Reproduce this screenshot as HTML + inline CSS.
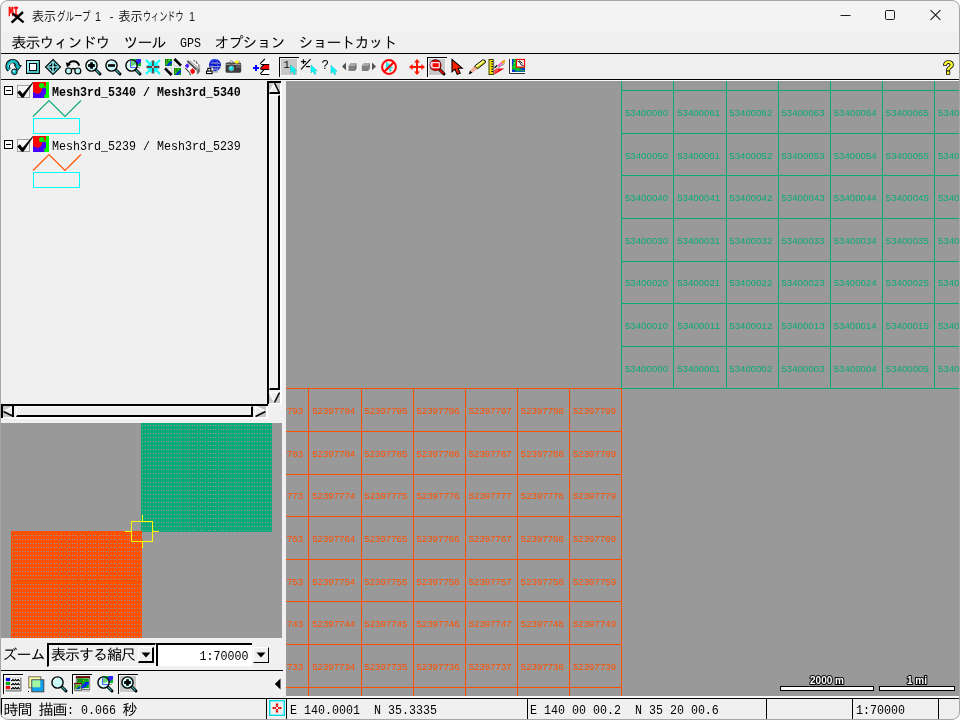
<!DOCTYPE html>
<html lang="ja"><head><meta charset="utf-8"><title>表示グループ 1 - 表示ウィンドウ 1</title>
<style>
html,body{margin:0;padding:0;background:#fff}
body{width:960px;height:720px;overflow:hidden;position:relative}
div,svg{box-sizing:border-box}
svg{position:absolute;overflow:visible}
.l{position:absolute;font-family:"Liberation Mono",monospace;font-size:11.667px;line-height:12px;white-space:pre;color:#000;transform:scaleY(1.15);transform-origin:0 0;letter-spacing:0}
.lb{font-weight:bold}
.j{position:absolute;font-family:"Liberation Mono","IPAGothic",monospace;font-size:15px;line-height:15px;letter-spacing:-1px;white-space:pre;color:#000}
.t{position:absolute;font-family:"Liberation Sans","Noto Sans CJK JP",sans-serif;font-size:12px;line-height:16px;white-space:pre;color:#1a1a1a}
#root{position:absolute;left:0;top:0;width:960px;height:720px;overflow:hidden;will-change:transform}
#frame{position:absolute;left:0;top:0;width:960px;height:720px;border:1px solid #a6a6a6;border-radius:8px;box-shadow:0 0 0 12px #fff;pointer-events:none}
text{white-space:pre}
</style></head>
<body>
<div id="root">
<div style="position:absolute;left:0px;top:0px;width:960px;height:31px;background:#f3f3f3;"></div>
<div style="position:absolute;left:0px;top:31px;width:960px;height:689px;background:#f0f0f0;"></div>
<svg style="left:8px;top:6.6px" width="18" height="18" viewBox="0 0 18 18"><text x="0.4" y="8.6" font-family="'Liberation Mono',monospace" font-weight="bold" font-size="12.4" fill="#ff0000" stroke="#ff0000" stroke-width="0.5" textLength="10" lengthAdjust="spacingAndGlyphs">MI</text><path d="M4.6 6.4L15.6 15.4M15 5L3.6 15.6" stroke="#000" stroke-width="2.4"/></svg>
<div class="t" style="left:32px;top:9px;">表示</div>
<div class="t" style="left:56.5px;top:9px;transform:scaleX(0.71);transform-origin:0 0;">グループ</div>
<div class="t" style="left:94.5px;top:9px;transform:scaleX(0.9);transform-origin:0 0;">1</div>
<div class="t" style="left:109.5px;top:9px;">-</div>
<div class="t" style="left:118.5px;top:9px;">表示</div>
<div class="t" style="left:143px;top:9px;transform:scaleX(0.675);transform-origin:0 0;">ウィンドウ</div>
<div class="t" style="left:188.5px;top:9px;transform:scaleX(0.9);transform-origin:0 0;">1</div>
<svg style="left:830px;top:0" width="130" height="30" viewBox="0 0 130 30" fill="none" stroke="#1a1a1a" stroke-width="1">
<path d="M10.5 15.5H20.5"/><rect x="55.5" y="10.5" width="9" height="9" rx="1.2"/><path d="M100.6 10.1L110.4 19.9M110.4 10.1L100.6 19.9" stroke-width="1.1"/></svg>
<div class="j" style="left:11.5px;top:37px;">表示ウィンドウ</div>
<div class="j" style="left:123.5px;top:37px;">ツール</div>
<div class="j" style="left:214.5px;top:37px;">オプション</div>
<div class="j" style="left:298.5px;top:37px;">ショートカット</div>
<div class="l" style="left:180px;top:37px;">GPS</div>
<div style="position:absolute;left:0px;top:53px;width:960px;height:1px;background:#000;"></div>
<div style="position:absolute;left:0px;top:79px;width:960px;height:1px;background:#000;"></div>
<div style="position:absolute;left:285px;top:80px;width:675px;height:1px;background:#fafafa;"></div>
<div style="position:absolute;left:279px;top:57px;width:20px;height:20px;background:#f4f4f4;border-left:1px solid #000;border-top:1px solid #000"></div>
<div style="position:absolute;left:281px;top:59px;width:16px;height:16px;background:#c8c8c8;"></div>
<div style="position:absolute;left:427px;top:57px;width:20px;height:20px;background:#f4f4f4;border-left:1px solid #000;border-top:1px solid #000"></div>
<div style="position:absolute;left:429px;top:59px;width:16px;height:16px;background:#c8c8c8;"></div>
<svg style="left:5px;top:59px" width="16" height="16" viewBox="0 0 16 16"><path d="M4.2 11A5.1 5.1 0 1 1 12.8 7.4" fill="none" stroke="#000" stroke-width="4.4"/><path d="M9.2 5.8L16.4 6.6L12.6 11.4Z" fill="#10b8c0" stroke="#000" stroke-width="0.9"/><path d="M4.2 11A5.1 5.1 0 1 1 12.8 7.4" fill="none" stroke="#18b8c0" stroke-width="2.6"/><path d="M3.4 8A4.4 4.4 0 0 1 7.8 3.6" fill="none" stroke="#7fe8e8" stroke-width="1"/><circle cx="9.4" cy="12.8" r="2.8" fill="#18c0c8" stroke="#000" stroke-width="1"/><circle cx="8.7" cy="12" r="0.9" fill="#bff"/></svg>
<svg style="left:25px;top:59px" width="16" height="16" viewBox="0 0 16 16"><rect x="1.5" y="1.5" width="13" height="13" fill="#48c0c0" stroke="#000"/><path d="M2 2H14L11.5 4.5H4.5V11.5L2 14Z" fill="#9ff0f0"/><rect x="4.5" y="4.5" width="7" height="7" fill="#fff" stroke="#000"/></svg>
<svg style="left:45px;top:59px" width="16" height="16" viewBox="0 0 16 16"><path d="M8 0.5L15.5 8L8 15.5L0.5 8Z" fill="#8cecec" stroke="#000" stroke-width="1.1"/><path d="M8 1.6L14.4 8L8 14.4Z" fill="#50c8cc"/><path d="M8 2.4V13.6M2.4 8H13.6" stroke="#208890" stroke-width="2.6"/><path d="M8 2.4V13.6M2.4 8H13.6" stroke="#c8ffff" stroke-width="1.2"/><path d="M4.6 6.6H6.6V4.6M11.4 6.6H9.4V4.6M4.6 9.4H6.6V11.4M11.4 9.4H9.4V11.4" stroke="#000" stroke-width="1.1" fill="none"/></svg>
<svg style="left:65px;top:59px" width="16" height="16" viewBox="0 0 16 16"><path d="M3.2 6.2C4.5 1.2 12.2 0.6 14.2 6.6" fill="none" stroke="#000" stroke-width="2"/><path d="M0.8 3.2L5.8 5.2L2 8.6Z" fill="#000"/><path d="M6 11C7 9 9.6 9 10.6 11" fill="none" stroke="#000" stroke-width="1.3"/><circle cx="3.6" cy="12" r="3" fill="#b8f6f6" stroke="#000" stroke-width="1.2"/><circle cx="12.8" cy="12" r="3" fill="#b8f6f6" stroke="#000" stroke-width="1.2"/></svg>
<svg style="left:85px;top:59px" width="16" height="16" viewBox="0 0 16 16"><path d="M10.2 10.2L15 15" stroke="#000" stroke-width="3" stroke-linecap="round"/><path d="M11 11L14.6 14.6" stroke="#30b0b0" stroke-width="1.2"/><circle cx="6.5" cy="6.5" r="5.6" fill="#c8fafa" stroke="#000" stroke-width="1.4"/><path d="M3 5.5A3.8 3.8 0 0 1 6 2.6" stroke="#fff" stroke-width="1.2" fill="none"/><path d="M6.5 3.2V9.8M3.2 6.5H9.8" stroke="#000" stroke-width="2.8"/></svg>
<svg style="left:105px;top:59px" width="16" height="16" viewBox="0 0 16 16"><path d="M10.2 10.2L15 15" stroke="#000" stroke-width="3" stroke-linecap="round"/><path d="M11 11L14.6 14.6" stroke="#30b0b0" stroke-width="1.2"/><circle cx="6.5" cy="6.5" r="5.6" fill="#c8fafa" stroke="#000" stroke-width="1.4"/><path d="M3 5.5A3.8 3.8 0 0 1 6 2.6" stroke="#fff" stroke-width="1.2" fill="none"/><path d="M3 6.5H10" stroke="#000" stroke-width="2.6"/></svg>
<svg style="left:125px;top:59px" width="16" height="16" viewBox="0 0 16 16"><rect x="5" y="0" width="11" height="7" fill="#00c020"/><path d="M5 5L9 4L12 0H16V3L11 7H5Z" fill="#3020ff"/><path d="M9 8.5H15" stroke="#909090"/><path d="M10.2 10.2L15 15" stroke="#000" stroke-width="3" stroke-linecap="round"/><path d="M11 11L14.6 14.6" stroke="#30b0b0" stroke-width="1.2"/><circle cx="6.5" cy="6.5" r="5.6" fill="#d8fcfc" stroke="#000" stroke-width="1.4"/><path d="M3 5.5A3.8 3.8 0 0 1 6 2.6" stroke="#fff" stroke-width="1.2" fill="none"/><path d="M5.5 1.5V8.5H11" stroke="#6060ff" stroke-width="1" fill="none"/><path d="M6 2.2A5 5 0 0 1 11.6 5L6 7.5Z" fill="#30c040" opacity="0.7"/></svg>
<svg style="left:145px;top:59px" width="16" height="16" viewBox="0 0 16 16"><path d="M8 1.5V14.5M1.5 8H14.5" stroke="#5a4848" stroke-width="2.6"/><g stroke="#00ffff" fill="none"><path d="M1 1L6.4 6.4M15 1L9.6 6.4M1 15L6.4 9.6M15 15L9.6 9.6" stroke-width="2"/><path d="M2.6 6.3H6.3V2.6M13.4 6.3H9.7V2.6M2.6 9.7H6.3V13.4M13.4 9.7H9.7V13.4" stroke-width="1.6"/></g><rect x="7.2" y="7.2" width="1.6" height="1.6" fill="#fff"/></svg>
<svg style="left:165px;top:59px" width="16" height="16" viewBox="0 0 16 16"><rect x="0" y="0" width="7" height="7" fill="#00a818"/><path d="M0 0h3.15v2.1h-1.4000000000000001v2.1h-1.75Z" fill="#008010"/><path d="M1.75 7v-1.4000000000000001h1.4000000000000001v-1.54h1.4000000000000001v-1.54h2.4499999999999997v1.9600000000000002h-1.4000000000000001v1.54h-1.4000000000000001v0.9800000000000001Z" fill="#0020ff"/><path d="M1.26 1.05h1M0.84 2.94h1M3.5 1.4000000000000001h1M1.4000000000000001 4.760000000000001h1" stroke="#e0d000" stroke-width="1" fill="none"/><rect x="9" y="9" width="7" height="7" fill="#00a818"/><path d="M9 9h3.15v2.1h-1.4000000000000001v2.1h-1.75Z" fill="#008010"/><path d="M10.75 16v-1.4000000000000001h1.4000000000000001v-1.54h1.4000000000000001v-1.54h2.4499999999999997v1.9600000000000002h-1.4000000000000001v1.54h-1.4000000000000001v0.9800000000000001Z" fill="#0020ff"/><path d="M10.26 10.05h1M9.84 11.94h1M12.5 10.4h1M10.4 13.760000000000002h1" stroke="#e0d000" stroke-width="1" fill="none"/><path d="M9.2 0.4V7H16Z" fill="#fff" stroke="#b0b0b0" stroke-width="0.6"/><path d="M9.4 0L16 6.6" stroke="#000" stroke-width="2.6"/><path d="M0 9H6.8V15.8Z" fill="#fff" stroke="#b0b0b0" stroke-width="0.6"/><path d="M0 9.4L6.6 16" stroke="#000" stroke-width="2.6"/></svg>
<svg style="left:185px;top:59px" width="16" height="17" viewBox="0 0 16 17"><path d="M1 3.4L7.6 0.6L15.2 6V12.4L11.4 16.4H4.4L0.2 10.4Z" fill="#fafafa"/><path d="M11.6 8.4L15.2 6V12.6L11.6 16.4Z" fill="#a8a8a8"/><path d="M12.4 11L14.4 9.4V13L12.6 15Z" fill="#606060"/><path d="M2.4 2L11.6 10.6" stroke="#484848" stroke-width="1.8"/><path d="M5 1.6L12.6 8.6" stroke="#b0b0b0" stroke-width="1.2"/><path d="M8.4 1.2l2 1.4M11.6 2.4l0.4 2.6M13 6h1.4" stroke="#383838" stroke-width="1"/><path d="M0.7 6.2L2.3 4.6L3.8 6.2V7.6L2.3 8.9L0.7 7.6Z" fill="#4418ff" stroke="#4418ff" stroke-width="0.6"/><path d="M5.8 11L7.6 9.6L9.6 11.2V13.4L7.8 14.9L5.8 13.4Z" fill="#ff0010" stroke="#ff0010" stroke-width="0.6"/><path d="M0.2 9.2L4.6 13.6M4.4 14.4l1.4 1.6" stroke="#484848" stroke-width="1.2"/></svg>
<svg style="left:205px;top:59px" width="18" height="16" viewBox="0 0 18 16"><path d="M7 12.9H13" stroke="#909090" stroke-width="1.2"/><circle cx="10" cy="5.9" r="6" fill="#0818d0"/><path d="M5 3.4C6 1.4 8.4 0.4 10 0.4" stroke="#4060ff" stroke-width="1.2" fill="none"/><path d="M6.4 4.4C8 3 9.6 4.6 11 4C12.4 3.4 13 4.6 14.6 4.4M5.4 7.4C7.4 6.4 9 8.6 11.4 7.6C13 7 14 8 15.6 7.4M7.4 10.4C9 9.6 11 10.8 13.4 9.8" stroke="#e8e0c0" stroke-width="0.9" fill="none"/><path d="M10 0.6C12 1 12.6 2.4 12.2 3.4M12.4 5.4C13.4 7 13 9 12 10.8" stroke="#6080ff" stroke-width="0.8" fill="none"/><rect x="0.6" y="8.6" width="7.4" height="7" fill="#f8f8f8"/><path d="M2.8 12V9.4H5.8V12" fill="#fff" stroke="#000" stroke-width="1.1"/><rect x="1.5" y="12.1" width="5.6" height="2.5" fill="#fff" stroke="#000" stroke-width="1.1"/></svg>
<svg style="left:225px;top:59px" width="17" height="16" viewBox="0 0 17 16"><path d="M0.6 5.2C0.6 4 1.6 3.6 2.6 3.6H4.2L6.4 0.8L8.6 3.6H14.4C15.6 3.6 16.2 4.4 16.2 5.4V12C16.2 13.2 15.4 13.8 14.4 13.8H2.4C1.2 13.8 0.6 13 0.6 12Z" fill="#3c3c3c"/><path d="M1.2 5.4H15.6" stroke="#9a9a9a" stroke-width="1.2"/><path d="M11 6.4H15.8V9H11Z" fill="#5c5c5c"/><path d="M4.8 3.4L6.4 1.2L8 3.4Z" fill="#fff"/><circle cx="6.3" cy="9.4" r="3.6" fill="#8c8c8c" stroke="#1c1c1c" stroke-width="0.8"/><circle cx="6.3" cy="9.4" r="2.1" fill="#00e0f0"/><circle cx="5.7" cy="8.8" r="0.8" fill="#b0ffff"/><rect x="10.2" y="1.6" width="3.2" height="2.8" fill="#ffff00"/><path d="M13.6 1.2L15 3.8" stroke="#b0b0b0" stroke-width="1"/></svg>
<svg style="left:252px;top:59px" width="18" height="17" viewBox="0 0 18 17"><path d="M4 6V12M1 9H7" stroke="#0000ff" stroke-width="2"/><path d="M12.7 0.2H17.2V5.2H8.6Z" fill="#fff"/><path d="M11.8 11H17.2V15.2H8.6Z" fill="#fff"/><path d="M11.5 6H17.2V10.2H8.4Z" fill="#ff0000"/><path d="M12.9 0L8.2 4.7M11.7 5.8L8.2 9.6M12 10.8L8.2 14.8" stroke="#000" stroke-width="1.1" fill="none"/><path d="M8.8 5.5H17.2M8.8 10.5H17.2M8.8 15.5H17.2" stroke="#000" stroke-width="1" fill="none"/></svg>
<svg style="left:281px;top:59px" width="16" height="16" viewBox="0 0 16 16"><text x="2.6" y="9.4" font-family="'Liberation Mono',monospace" font-size="10.5" fill="#000">1</text><path d="M9.6 6V14L11.6 12.2L13.2 15.4L14.6 14.8L13.1 11.8H15.8Z" fill="#00ffff" stroke="#20b0b0" stroke-width="0.5"/></svg>
<svg style="left:300px;top:59px" width="18" height="16" viewBox="0 0 18 16"><path d="M3.5 0.2V5M1 2.6H6" stroke="#000" stroke-width="1.2"/><path d="M10.6 0.2L1 10.4" stroke="#000" stroke-width="1.1"/><path d="M6 7.6H10" stroke="#000" stroke-width="1.2"/><path d="M11 6V14L13 12.2L14.6 15.4L16 14.8L14.5 11.8H17.2Z" fill="#00ffff" stroke="#20b0b0" stroke-width="0.5"/></svg>
<svg style="left:321px;top:59px" width="18" height="16" viewBox="0 0 18 16"><text x="0.4" y="9.6" font-family="'Liberation Mono',monospace" font-size="12.5" fill="#000">?</text><path d="M10 6.4V14.4L12 12.600000000000001L13.6 15.8L15 15.200000000000001L13.5 12.2H16.2Z" fill="#00ffff" stroke="#20b0b0" stroke-width="0.5"/></svg>
<svg style="left:341px;top:59px" width="16" height="16" viewBox="0 0 16 16"><path d="M5 3.6V11.2L1 7.4Z" fill="#505050"/><path d="M7.5 6.5L9.5 4H15.5L14 6.5Z" fill="#a8a8a8"/><rect x="7.5" y="6.5" width="6.5" height="5.5" fill="#808080"/><path d="M14 6.5L15.5 4V9.6L14 12Z" fill="#686868"/></svg>
<svg style="left:361px;top:59px" width="16" height="16" viewBox="0 0 16 16"><path d="M0.8 6.5L2.8 4H8.8L7.3 6.5Z" fill="#a8a8a8"/><rect x="0.8" y="6.5" width="6.5" height="5.5" fill="#808080"/><path d="M7.3 6.5L8.8 4V9.6L7.3 12Z" fill="#686868"/><path d="M11 3.6V11.2L15 7.4Z" fill="#505050"/></svg>
<svg style="left:381px;top:59px" width="16" height="16" viewBox="0 0 16 16"><path d="M5.4 3V11L7.4 9.2L9.0 12.4L10.4 11.8L8.9 8.8H11.600000000000001Z" fill="#00ffff" stroke="#20b0b0" stroke-width="0.5"/><circle cx="8" cy="8" r="6.9" fill="none" stroke="#ff0000" stroke-width="2"/><path d="M12.8 3.2L3.2 12.8" stroke="#ff0000" stroke-width="2"/></svg>
<svg style="left:409px;top:59px" width="16" height="16" viewBox="0 0 16 16"><path d="M8 2V14M2 8H14" stroke="#ff1800" stroke-width="2"/><g fill="#ff1800"><path d="M8 0L11 3.6H5Z"/><path d="M8 16L11 12.4H5Z"/><path d="M0 8L3.6 5V11Z"/><path d="M16 8L12.4 5V11Z"/></g></svg>
<svg style="left:429px;top:59px" width="16" height="16" viewBox="0 0 16 16"><path d="M10.4 10.4L15 15" stroke="#000" stroke-width="3" stroke-linecap="round"/><path d="M10.6 10.6L14.6 14.6" stroke="#ff0000" stroke-width="1.6"/><circle cx="6.5" cy="6.2" r="5.9" fill="#400000"/><circle cx="6.5" cy="6.2" r="5.2" fill="#e00000"/><path d="M2.2 8A4.6 4.6 0 0 1 3.4 2.8" stroke="#ffb0ff" stroke-width="1.3" fill="none"/><rect x="3" y="3.7" width="7.2" height="5" fill="#ff0000" stroke="#fff" stroke-width="1.1"/></svg>
<svg style="left:450px;top:59px" width="16" height="16" viewBox="0 0 16 16"><path d="M2 0.5V12.8L5 10.2L7.2 15.4L10.2 14.2L8 9.2H12.2Z" fill="#ff2000" stroke="#000" stroke-width="1.1" stroke-linejoin="miter"/></svg>
<svg style="left:468px;top:59px" width="18" height="16" viewBox="0 0 18 16"><path d="M0.6 15.6L2 11.6L4.6 13.8Z" fill="#000"/><path d="M2 11.6L6.6 7L9.4 9.8L4.6 13.8Z" fill="#f4a8a0"/><path d="M3.4 12.2L7.6 8.4" stroke="#e0c060" stroke-width="0.8"/><path d="M6.6 7L14.8 0.8L17.2 1.6L17.4 3.6L9.4 9.8Z" fill="#ffff40" stroke="#000" stroke-width="1"/><path d="M7.8 7.6L15.6 1.8" stroke="#fff" stroke-width="0.8"/><path d="M9 9L17 3" stroke="#909000" stroke-width="0.8"/></svg>
<svg style="left:488px;top:59px" width="18" height="16" viewBox="0 0 18 16"><rect x="1" y="0.5" width="4.4" height="15" fill="#f0e000" stroke="#404000" stroke-width="1"/><path d="M5.6 0.5V15.5" stroke="#707070" stroke-width="1.2"/><path d="M3.4 2.5H5M3.4 5H5M3.4 7.5H5M3.4 10H5M3.4 12.5H5" stroke="#000" stroke-width="1"/><path d="M6.4 15.5L16.4 9.4H8.4L6.4 11.4Z" fill="#e80010"/><path d="M6.4 15.5L11 10.4L8.6 9.6L6.4 11.4Z" fill="#ff5050"/><path d="M6.6 8.8L9.4 6.2" stroke="#000" stroke-width="1.2"/><path d="M9 6.6L14 2.4L16.4 0.8L17 2.6L11 7.8Z" fill="#ff60d0"/><path d="M13.2 2.8L16.6 0.6L17.2 3L14.6 5Z" fill="#f0a000"/><path d="M10 8.6L16.6 4.6" stroke="#808080" stroke-width="1"/></svg>
<svg style="left:508px;top:59px" width="18" height="16" viewBox="0 0 18 16"><path d="M1.5 0V14.5H17" stroke="#303030" stroke-width="1" fill="none"/><path d="M2.5 0V13.5H17" stroke="#fff" stroke-width="1" fill="none"/><rect x="4" y="0" width="13" height="13" fill="#00c020"/><path d="M4 0H5.6V3L4.8 6L4 8ZM11 9.4L17 9V11L13.6 10.8Z M4 11L6 10L7.4 11.4L6 13H4Z" fill="#0030e0"/><path d="M5.4 3.4h1v2M6 7l1 1.4M9 12h2M13 12h2.6" stroke="#60f060" stroke-width="1"/><path d="M4 12.2H17" stroke="#0030e0" stroke-width="0.9"/><rect x="8.5" y="0.5" width="8" height="7.6" fill="#fff" stroke="#ff0000" stroke-width="1.2"/><path d="M9.6 2L12 3.6L13 5.8L15.6 6.6M11 1.6L14.6 4.4" stroke="#000" stroke-width="0.9" fill="none"/></svg>
<svg style="left:940px;top:59px" width="16" height="16" viewBox="0 0 16 16"><text x="8.4" y="14.6" text-anchor="middle" font-family="'Liberation Sans',sans-serif" font-weight="bold" font-size="18" fill="#ffff30" stroke="#000" stroke-width="1.7" paint-order="stroke" stroke-linejoin="round">?</text></svg>
<svg style="left:4px;top:86px" width="9" height="9" viewBox="0 0 9 9" shape-rendering="crispEdges"><rect x="0.5" y="0.5" width="8" height="8" fill="#fff" stroke="#000"/><path d="M2 4.5H7" stroke="#000"/></svg>
<svg style="left:17px;top:82px" width="17" height="16" viewBox="0 0 17 16"><rect x="0.5" y="3.5" width="12" height="12" fill="#f6f6f6" stroke="#a0a0a0"/><path d="M0.2 10.5L2.8 8.3L5.6 11.8L15.6 0.2L16.4 0.6L6.4 15.8H4.8Z" fill="#000"/></svg>
<svg style="left:33px;top:82px" width="16" height="16" viewBox="0 0 16 16"><rect width="16" height="16" fill="#ff0000"/><path d="M0 9.6C2 11.6 5 12.6 7.6 10.4C9.6 8.6 8.4 6.4 10.4 5.6C12 5 13.4 6.4 13.2 8.4L13.2 16H0Z" fill="#4400ff"/><path d="M13 0H16V16H11.6C10.6 14.4 11.4 12.4 13 12Z" fill="#00ff00"/><circle cx="8.6" cy="3.6" r="2.6" fill="#00f000"/><path d="M10 5L12.6 6.4L13.2 4Z" fill="#00f000"/></svg>
<div class="l lb" style="left:52px;top:86px;">Mesh3rd_5340 / Mesh3rd_5340</div>
<svg style="left:32px;top:99px" width="52" height="36" viewBox="0 0 52 36" fill="none"><path d="M1 17.5L17 1.5L33 17.5L49 1.5" stroke="#0aaa78" stroke-width="1.1"/><rect x="1.5" y="19.5" width="46" height="15" stroke="#00ffff" stroke-width="1" shape-rendering="crispEdges"/></svg>
<svg style="left:4px;top:140px" width="9" height="9" viewBox="0 0 9 9" shape-rendering="crispEdges"><rect x="0.5" y="0.5" width="8" height="8" fill="#fff" stroke="#000"/><path d="M2 4.5H7" stroke="#000"/></svg>
<svg style="left:17px;top:136px" width="17" height="16" viewBox="0 0 17 16"><rect x="0.5" y="3.5" width="12" height="12" fill="#f6f6f6" stroke="#a0a0a0"/><path d="M0.2 10.5L2.8 8.3L5.6 11.8L15.6 0.2L16.4 0.6L6.4 15.8H4.8Z" fill="#000"/></svg>
<svg style="left:33px;top:136px" width="16" height="16" viewBox="0 0 16 16"><rect width="16" height="16" fill="#ff0000"/><path d="M0 9.6C2 11.6 5 12.6 7.6 10.4C9.6 8.6 8.4 6.4 10.4 5.6C12 5 13.4 6.4 13.2 8.4L13.2 16H0Z" fill="#4400ff"/><path d="M13 0H16V16H11.6C10.6 14.4 11.4 12.4 13 12Z" fill="#00ff00"/><circle cx="8.6" cy="3.6" r="2.6" fill="#00f000"/><path d="M10 5L12.6 6.4L13.2 4Z" fill="#00f000"/></svg>
<div class="l" style="left:52px;top:140px;">Mesh3rd_5239 / Mesh3rd_5239</div>
<svg style="left:32px;top:153px" width="52" height="36" viewBox="0 0 52 36" fill="none"><path d="M1 17.5L17 1.5L33 17.5L49 1.5" stroke="#ff5000" stroke-width="1.1"/><rect x="1.5" y="19.5" width="46" height="15" stroke="#00ffff" stroke-width="1" shape-rendering="crispEdges"/></svg>
<div style="position:absolute;left:267px;top:81px;width:2px;height:323px;background:#000;"></div>
<div style="position:absolute;left:267px;top:81px;width:14px;height:2px;background:#000;"></div>
<div style="position:absolute;left:280px;top:83px;width:2px;height:321px;background:#fff;"></div>
<div style="position:absolute;left:269px;top:83px;width:11px;height:11px;background:#c8c8c8;"></div>
<svg style="left:269px;top:83px" width="11" height="11" viewBox="0 0 11 11"><path d="M5.5 0.5L0.5 10H10.5Z" fill="#ececec"/><path d="M5.5 0L0.5 10" stroke="#fff" stroke-width="1.6" fill="none"/><path d="M5.5 0L10.5 10" stroke="#000" stroke-width="1.5" fill="none"/><path d="M0.5 10H11" stroke="#000" stroke-width="2" fill="none"/></svg>
<div style="position:absolute;left:269px;top:95px;width:11px;height:295px;background:#f0f0f0;border-left:1px solid #fff;border-top:1px solid #fff;border-right:2px solid #000;border-bottom:2px solid #000"></div>
<div style="position:absolute;left:269px;top:392px;width:11px;height:11px;background:#c8c8c8;"></div>
<svg style="left:269px;top:392px" width="11" height="11" viewBox="0 0 11 11"><path d="M0.5 0.5H10.5L5.5 10.5Z" fill="#ececec"/><path d="M0.5 0.5H10.5" stroke="#fff" stroke-width="1.4"/><path d="M0.5 0.5L5.5 10.5" stroke="#fff" stroke-width="1.6" fill="none"/><path d="M10.5 0.5L5.5 10.5" stroke="#000" stroke-width="1.5" fill="none"/></svg>
<div style="position:absolute;left:269px;top:403px;width:13px;height:1px;background:#fff;"></div>
<div style="position:absolute;left:1px;top:404px;width:267px;height:2px;background:#000;"></div>
<div style="position:absolute;left:1px;top:404px;width:2px;height:14px;background:#000;"></div>
<div style="position:absolute;left:3px;top:417px;width:263px;height:2px;background:#fff;"></div>
<div style="position:absolute;left:266px;top:406px;width:2px;height:13px;background:#fff;"></div>
<div style="position:absolute;left:3px;top:406px;width:11px;height:11px;background:#c8c8c8;"></div>
<svg style="left:3px;top:406px" width="11" height="11" viewBox="0 0 11 11"><path d="M10.5 0.5L0.5 5.5L10.5 10.5Z" fill="#ececec"/><path d="M10.5 0.5L0.5 5.5" stroke="#fff" stroke-width="1.6" fill="none"/><path d="M0.5 5.5L10.5 10.5" stroke="#000" stroke-width="1.5" fill="none"/><path d="M10 0V11" stroke="#000" stroke-width="2" fill="none"/></svg>
<div style="position:absolute;left:16px;top:406px;width:237px;height:11px;background:#f0f0f0;border-left:1px solid #fff;border-top:1px solid #fff;border-right:2px solid #000;border-bottom:2px solid #000"></div>
<div style="position:absolute;left:255px;top:406px;width:11px;height:11px;background:#c8c8c8;"></div>
<svg style="left:255px;top:406px" width="11" height="11" viewBox="0 0 11 11"><path d="M0.5 0.5L10.5 5.5L0.5 10.5Z" fill="#ececec"/><path d="M0.5 0V11" stroke="#fff" stroke-width="1.4"/><path d="M0.5 0.5L10.5 5.5" stroke="#fff" stroke-width="1.6" fill="none"/><path d="M10.5 5.5L0.5 10.5" stroke="#000" stroke-width="1.5" fill="none"/></svg>
<svg style="left:1px;top:423px" width="281" height="215" viewBox="1 423 281 215" shape-rendering="crispEdges"><defs><path id="rg" d="M142 0h1m2 0h1m2 0h1m1 0h1m2 0h1m1 0h1m2 0h1m2 0h1m1 0h1m2 0h1m1 0h1m2 0h1m2 0h1m1 0h1m2 0h1m1 0h1m2 0h1m2 0h1m1 0h1m2 0h1m1 0h1m2 0h1m2 0h1m1 0h1m2 0h1m2 0h1m1 0h1m2 0h1m1 0h1m2 0h1m2 0h1m1 0h1m2 0h1m1 0h1m2 0h1m2 0h1m1 0h1m2 0h1m1 0h1m2 0h1m2 0h1m1 0h1m2 0h1m1 0h1m2 0h1m2 0h1m1 0h1m2 0h1m1 0h1m2 0h1" stroke="#999999" stroke-width="1" fill="none"/><path id="ro" d="M12 0h1m2 0h1m1 0h1m2 0h1m1 0h1m2 0h1m2 0h1m1 0h1m2 0h1m1 0h1m2 0h1m2 0h1m1 0h1m2 0h1m1 0h1m2 0h1m2 0h1m1 0h1m2 0h1m1 0h1m2 0h1m2 0h1m1 0h1m2 0h1m1 0h1m2 0h1m2 0h1m1 0h1m2 0h1m2 0h1m1 0h1m2 0h1m1 0h1m2 0h1m2 0h1m1 0h1m2 0h1m1 0h1m2 0h1m2 0h1m1 0h1m2 0h1m1 0h1m2 0h1m2 0h1m1 0h1m2 0h1m1 0h1m2 0h1m2 0h1" stroke="#999999" stroke-width="1" fill="none"/></defs><rect x="1" y="423" width="281" height="215" fill="#999999"/><rect x="141" y="423" width="131" height="109" fill="#0aaa78"/><rect x="11" y="531" width="131" height="107" fill="#ff5000"/><use href="#rg" y="530.5"/><use href="#rg" y="526.5"/><use href="#rg" y="522.5"/><use href="#rg" y="518.5"/><use href="#rg" y="514.5"/><use href="#rg" y="510.5"/><use href="#rg" y="506.5"/><use href="#rg" y="502.5"/><use href="#rg" y="498.5"/><use href="#rg" y="494.5"/><use href="#rg" y="490.5"/><use href="#rg" y="486.5"/><use href="#rg" y="482.5"/><use href="#rg" y="478.5"/><use href="#rg" y="473.5"/><use href="#rg" y="469.5"/><use href="#rg" y="465.5"/><use href="#rg" y="461.5"/><use href="#rg" y="457.5"/><use href="#rg" y="453.5"/><use href="#rg" y="449.5"/><use href="#rg" y="445.5"/><use href="#rg" y="441.5"/><use href="#rg" y="437.5"/><use href="#rg" y="433.5"/><use href="#rg" y="429.5"/><use href="#rg" y="425.5"/><use href="#ro" y="535.5"/><use href="#ro" y="539.5"/><use href="#ro" y="543.5"/><use href="#ro" y="547.5"/><use href="#ro" y="551.5"/><use href="#ro" y="555.5"/><use href="#ro" y="559.5"/><use href="#ro" y="563.5"/><use href="#ro" y="567.5"/><use href="#ro" y="571.5"/><use href="#ro" y="575.5"/><use href="#ro" y="579.5"/><use href="#ro" y="584.5"/><use href="#ro" y="588.5"/><use href="#ro" y="592.5"/><use href="#ro" y="596.5"/><use href="#ro" y="600.5"/><use href="#ro" y="604.5"/><use href="#ro" y="608.5"/><use href="#ro" y="612.5"/><use href="#ro" y="616.5"/><use href="#ro" y="620.5"/><use href="#ro" y="624.5"/><use href="#ro" y="628.5"/><use href="#ro" y="632.5"/><use href="#ro" y="636.5"/><g stroke="#ffff00" stroke-width="1" fill="none"><rect x="131.5" y="521.5" width="21" height="20"/><path d="M142.5 515V521M142.5 542V548M125 531.5H131M153 531.5H159"/></g></svg>
<div class="j" style="left:2.5px;top:649px;">ズーム</div>
<div style="position:absolute;left:47px;top:643px;width:109px;height:24px;background:#f0f0f0;border-left:2px solid #000;border-top:2px solid #000;border-right:1px solid #fff;border-bottom:1px solid #fff"></div>
<div class="j" style="left:51.0px;top:649px;">表示する縮尺</div>
<div style="position:absolute;left:138px;top:647px;width:16px;height:16px;background:#f0f0f0;border-left:1px solid #fff;border-top:1px solid #fff;border-right:2px solid #000;border-bottom:2px solid #000"></div>
<svg style="left:138px;top:647px" width="16" height="16" viewBox="0 0 16 16"><path d="M3.5 5.5H12.5L8 10.5Z" fill="#000"/></svg>
<div style="position:absolute;left:156px;top:643px;width:96px;height:23px;background:#fff;border-left:2px solid #000;border-top:2px solid #000"></div>
<div class="l" style="left:199.5px;top:650px;">1:70000</div>
<div style="position:absolute;left:253px;top:647px;width:16px;height:16px;background:#f0f0f0;border-left:1px solid #fff;border-top:1px solid #fff;border-right:1px solid #000;border-bottom:1px solid #000"></div>
<svg style="left:253px;top:647px" width="16" height="16" viewBox="0 0 16 16"><path d="M3.5 5.5H12.5L8 10.5Z" fill="#000"/></svg>
<div style="position:absolute;left:1px;top:670px;width:282px;height:1px;background:#000;"></div>
<div style="position:absolute;left:3px;top:674px;width:20px;height:20px;background:#f6f6f6;border-left:1px solid #000;border-top:1px solid #000"></div>
<div style="position:absolute;left:72px;top:674px;width:20px;height:20px;background:#f6f6f6;border-left:1px solid #000;border-top:1px solid #000"></div>
<div style="position:absolute;left:118px;top:674px;width:20px;height:20px;background:#f6f6f6;border-left:1px solid #000;border-top:1px solid #000"></div>
<div style="position:absolute;left:120px;top:676px;width:16px;height:16px;background:#c8c8c8;"></div>
<svg style="left:5px;top:676px" width="17" height="16" viewBox="0 0 17 16"><rect x="0.5" y="1.5" width="15.5" height="13.5" fill="#c4c4c4"/><path d="M0.5 15H16V1.5" stroke="#707070" stroke-width="1" fill="none"/><rect x="5.4" y="2" width="9.4" height="11.4" fill="#fff"/><rect x="0.9" y="2" width="4.2" height="2.9" fill="#0000ff"/><rect x="0.9" y="6" width="4.2" height="2.9" fill="#00a800"/><rect x="0.9" y="10" width="4.2" height="2.9" fill="#ff0000"/><path d="M6 4.6h1l1-1.2 1 1.2h.6l1-1.2 1 1.2h.6l1-1.2 1 1.2h.6M6 8.6h1l1-1.2 1 1.2h.6l1-1.2 1 1.2h.6l1-1.2 1 1.2h.6M6 12.6h1l1-1.2 1 1.2h.6l1-1.2 1 1.2h.6l1-1.2 1 1.2h.6" stroke="#000" stroke-width="1.1" fill="none"/></svg>
<svg style="left:28px;top:676px" width="18" height="18" viewBox="0 0 18 18"><rect x="0.8" y="0.8" width="12" height="11" fill="#ffffa8" stroke="#707058"/><rect x="3.8" y="3.8" width="12" height="12" fill="#10a0f0" stroke="#404848"/><rect x="4.3" y="4.3" width="8" height="7" fill="#a4f4a0"/><rect x="0" y="15" width="1" height="1" fill="#000"/></svg>
<svg style="left:51px;top:676px" width="16" height="16" viewBox="0 0 16 16"><path d="M10.2 10.2L15 15" stroke="#000" stroke-width="3" stroke-linecap="round"/><path d="M11 11L14.6 14.6" stroke="#30b0b0" stroke-width="1.2"/><circle cx="6.5" cy="6.5" r="5.6" fill="#c8fafa" stroke="#000" stroke-width="1.4"/><path d="M3 5.5A3.8 3.8 0 0 1 6 2.6" stroke="#fff" stroke-width="1.2" fill="none"/></svg>
<svg style="left:74px;top:676px" width="18" height="18" viewBox="0 0 18 18"><rect x="1" y="14" width="15" height="1.8" fill="#c4c4c4"/><rect x="2.2" y="0.6" width="13.6" height="13" fill="#fff" stroke="#404040" stroke-width="0.7"/><rect x="2" y="0.3" width="14" height="2" fill="#700000"/><rect x="3.4" y="2.6" width="11.4" height="9.6" fill="#00a818"/><path d="M3.4 2.6h5.13v2.88h-2.2800000000000002v2.88h-2.85Z" fill="#008010"/><path d="M6.25 12.2v-1.92h2.2800000000000002v-2.112h2.2800000000000002v-2.112h3.9899999999999998v2.688h-2.2800000000000002v2.112h-2.2800000000000002v1.344Z" fill="#0020ff"/><path d="M5.452 4.04h1M4.768 6.632h1M9.1 4.52h1M5.68 9.128h1" stroke="#e0d000" stroke-width="1" fill="none"/><rect x="0.4" y="7.2" width="7" height="7" fill="#fff" stroke="#404040" stroke-width="0.7"/><rect x="0.2" y="7" width="7.4" height="1.4" fill="#700000"/><rect x="1.2" y="8.8" width="5.4" height="4.4" fill="#00a818"/><path d="M1.2 8.8h2.43v1.32h-1.08v1.32h-1.35Z" fill="#008010"/><path d="M2.55 13.200000000000001v-0.8800000000000001h1.08v-0.9680000000000001h1.08v-0.9680000000000001h1.89v1.2320000000000002h-1.08v0.9680000000000001h-1.08v0.6160000000000001Z" fill="#0020ff"/><path d="M2.1719999999999997 9.46h1M1.8479999999999999 10.648000000000001h1M3.9000000000000004 9.680000000000001h1M2.2800000000000002 11.792000000000002h1" stroke="#e0d000" stroke-width="1" fill="none"/></svg>
<svg style="left:97px;top:676px" width="16" height="16" viewBox="0 0 16 16"><rect x="5" y="0" width="11" height="7" fill="#00c020"/><path d="M5 5L9 4L12 0H16V3L11 7H5Z" fill="#3020ff"/><path d="M9 8.5H15" stroke="#909090"/><path d="M10.2 10.2L15 15" stroke="#000" stroke-width="3" stroke-linecap="round"/><path d="M11 11L14.6 14.6" stroke="#30b0b0" stroke-width="1.2"/><circle cx="6.5" cy="6.5" r="5.6" fill="#d8fcfc" stroke="#000" stroke-width="1.4"/><path d="M3 5.5A3.8 3.8 0 0 1 6 2.6" stroke="#fff" stroke-width="1.2" fill="none"/><path d="M5.5 1.5V8.5H11" stroke="#6060ff" stroke-width="1" fill="none"/><path d="M6 2.2A5 5 0 0 1 11.6 5L6 7.5Z" fill="#30c040" opacity="0.7"/></svg>
<svg style="left:120.5px;top:676px" width="16" height="16" viewBox="0 0 16 16"><path d="M10.2 10.2L15 15" stroke="#000" stroke-width="3" stroke-linecap="round"/><path d="M11 11L14.6 14.6" stroke="#30b0b0" stroke-width="1.2"/><circle cx="6.5" cy="6.5" r="5.6" fill="#c8fafa" stroke="#000" stroke-width="1.4"/><path d="M3 5.5A3.8 3.8 0 0 1 6 2.6" stroke="#fff" stroke-width="1.2" fill="none"/><path d="M6.5 3.2V9.8M3.2 6.5H9.8" stroke="#000" stroke-width="2.8"/></svg>
<svg style="left:274px;top:678px" width="8" height="12" viewBox="0 0 8 12"><path d="M6.5 0.5V11.5L0.8 6Z" fill="#000"/></svg>
<svg style="left:286px;top:81px;overflow:hidden" width="673" height="615" viewBox="286 81 673 615"><rect x="286" y="81" width="673" height="615" fill="#999999"/><g stroke="#0aaa78" stroke-width="1" shape-rendering="crispEdges" fill="none"><path d="M621.5 81V389.0M673.5 81V389.0M726.5 81V389.0M778.5 81V389.0M830.5 81V389.0M882.5 81V389.0M934.5 81V389.0M621.0 388.5H959M621.0 346.5H959M621.0 303.5H959M621.0 261.5H959M621.0 218.5H959M621.0 175.5H959M621.0 133.5H959M621.0 90.5H959"/></g><g stroke="#ff5000" stroke-width="1" shape-rendering="crispEdges" fill="none"><path d="M621.5 388.0V696M569.5 388.0V696M517.5 388.0V696M465.5 388.0V696M413.5 388.0V696M361.5 388.0V696M308.5 388.0V696M286 388.5H622.0M286 431.5H622.0M286 474.5H622.0M286 516.5H622.0M286 559.5H622.0M286 601.5H622.0M286 644.5H622.0M286 687.5H622.0"/></g><g font-family="'Liberation Sans',sans-serif" font-size="9.6" letter-spacing="0.05" text-anchor="middle" fill="#0aaa78"><text x="646.5" y="371.5">53400000</text><text x="698.7" y="371.5">53400001</text><text x="750.8" y="371.5">53400002</text><text x="803.0" y="371.5">53400003</text><text x="855.2" y="371.5">53400004</text><text x="907.3" y="371.5">53400005</text><text x="959.5" y="371.5">53400006</text><text x="646.5" y="328.9">53400010</text><text x="698.7" y="328.9">53400011</text><text x="750.8" y="328.9">53400012</text><text x="803.0" y="328.9">53400013</text><text x="855.2" y="328.9">53400014</text><text x="907.3" y="328.9">53400015</text><text x="959.5" y="328.9">53400016</text><text x="646.5" y="286.3">53400020</text><text x="698.7" y="286.3">53400021</text><text x="750.8" y="286.3">53400022</text><text x="803.0" y="286.3">53400023</text><text x="855.2" y="286.3">53400024</text><text x="907.3" y="286.3">53400025</text><text x="959.5" y="286.3">53400026</text><text x="646.5" y="243.7">53400030</text><text x="698.7" y="243.7">53400031</text><text x="750.8" y="243.7">53400032</text><text x="803.0" y="243.7">53400033</text><text x="855.2" y="243.7">53400034</text><text x="907.3" y="243.7">53400035</text><text x="959.5" y="243.7">53400036</text><text x="646.5" y="201.1">53400040</text><text x="698.7" y="201.1">53400041</text><text x="750.8" y="201.1">53400042</text><text x="803.0" y="201.1">53400043</text><text x="855.2" y="201.1">53400044</text><text x="907.3" y="201.1">53400045</text><text x="959.5" y="201.1">53400046</text><text x="646.5" y="158.5">53400050</text><text x="698.7" y="158.5">53400051</text><text x="750.8" y="158.5">53400052</text><text x="803.0" y="158.5">53400053</text><text x="855.2" y="158.5">53400054</text><text x="907.3" y="158.5">53400055</text><text x="959.5" y="158.5">53400056</text><text x="646.5" y="115.9">53400060</text><text x="698.7" y="115.9">53400061</text><text x="750.8" y="115.9">53400062</text><text x="803.0" y="115.9">53400063</text><text x="855.2" y="115.9">53400064</text><text x="907.3" y="115.9">53400065</text><text x="959.5" y="115.9">53400066</text></g><g font-family="'Liberation Sans',sans-serif" font-size="9.6" letter-spacing="0.05" text-anchor="middle" fill="#ff5000"><text x="594.5" y="414.1">52397799</text><text x="542.3" y="414.1">52397798</text><text x="490.2" y="414.1">52397797</text><text x="438.0" y="414.1">52397796</text><text x="385.8" y="414.1">52397795</text><text x="333.7" y="414.1">52397794</text><text x="281.5" y="414.1">52397793</text><text x="594.5" y="456.7">52397789</text><text x="542.3" y="456.7">52397788</text><text x="490.2" y="456.7">52397787</text><text x="438.0" y="456.7">52397786</text><text x="385.8" y="456.7">52397785</text><text x="333.7" y="456.7">52397784</text><text x="281.5" y="456.7">52397783</text><text x="594.5" y="499.3">52397779</text><text x="542.3" y="499.3">52397778</text><text x="490.2" y="499.3">52397777</text><text x="438.0" y="499.3">52397776</text><text x="385.8" y="499.3">52397775</text><text x="333.7" y="499.3">52397774</text><text x="281.5" y="499.3">52397773</text><text x="594.5" y="541.9">52397769</text><text x="542.3" y="541.9">52397768</text><text x="490.2" y="541.9">52397767</text><text x="438.0" y="541.9">52397766</text><text x="385.8" y="541.9">52397765</text><text x="333.7" y="541.9">52397764</text><text x="281.5" y="541.9">52397763</text><text x="594.5" y="584.5">52397759</text><text x="542.3" y="584.5">52397758</text><text x="490.2" y="584.5">52397757</text><text x="438.0" y="584.5">52397756</text><text x="385.8" y="584.5">52397755</text><text x="333.7" y="584.5">52397754</text><text x="281.5" y="584.5">52397753</text><text x="594.5" y="627.1">52397749</text><text x="542.3" y="627.1">52397748</text><text x="490.2" y="627.1">52397747</text><text x="438.0" y="627.1">52397746</text><text x="385.8" y="627.1">52397745</text><text x="333.7" y="627.1">52397744</text><text x="281.5" y="627.1">52397743</text><text x="594.5" y="669.7">52397739</text><text x="542.3" y="669.7">52397738</text><text x="490.2" y="669.7">52397737</text><text x="438.0" y="669.7">52397736</text><text x="385.8" y="669.7">52397735</text><text x="333.7" y="669.7">52397734</text><text x="281.5" y="669.7">52397733</text></g><g shape-rendering="crispEdges" fill="#fff" stroke="#000" stroke-width="1"><rect x="780.5" y="686.5" width="93" height="4"/><rect x="879.5" y="686.5" width="75" height="4"/></g><g font-family="'Liberation Sans',sans-serif" font-weight="bold" font-size="10" text-anchor="middle" fill="#fff" stroke="#000" stroke-width="2" paint-order="stroke" stroke-linejoin="round"><text x="827" y="683.5">2000 m</text><text x="917" y="683.5">1 mi</text></g></svg>
<div style="position:absolute;left:286px;top:696px;width:674px;height:2px;background:#fafafa;"></div>
<div style="position:absolute;left:0px;top:698px;width:960px;height:1px;background:#000;"></div>
<div style="position:absolute;left:1px;top:699px;width:1px;height:20px;background:#000;"></div>
<div style="position:absolute;left:266px;top:699px;width:1px;height:20px;background:#000;"></div>
<div style="position:absolute;left:286px;top:699px;width:1px;height:20px;background:#000;"></div>
<div style="position:absolute;left:527px;top:699px;width:1px;height:20px;background:#000;"></div>
<div style="position:absolute;left:766px;top:699px;width:1px;height:20px;background:#000;"></div>
<div style="position:absolute;left:852px;top:699px;width:1px;height:20px;background:#000;"></div>
<div style="position:absolute;left:938px;top:699px;width:1px;height:20px;background:#000;"></div>
<div class="j" style="left:3.5px;top:704px;">時間</div>
<div class="j" style="left:38.5px;top:704px;">描画</div>
<div class="l" style="left:67px;top:704px;">: 0.066</div>
<div class="j" style="left:122.5px;top:704px;">秒</div>
<svg style="left:269px;top:700px" width="16" height="16" viewBox="0 0 16 16"><rect x="0.75" y="0.75" width="14.5" height="14.5" fill="#f0f0f0" stroke="#00d8e0" stroke-width="1.5"/><rect x="1.8" y="1.8" width="12.4" height="12.4" fill="none" stroke="#a0f4f4" stroke-width="0.6"/><path d="M8 3.6V7M8 9V12.4M3.6 8H7M9 8H12.4" stroke="#e00000" stroke-width="2.2"/><path d="M8 5V6.4M8 9.6V11M5 8H6.4M9.6 8H11" stroke="#ff9090" stroke-width="0.8"/></svg>
<div class="l" style="left:290px;top:704px;">E 140.0001  N 35.3335</div>
<div class="l" style="left:530px;top:704px;">E 140 00 00.2  N 35 20 00.6</div>
<div class="l" style="left:856px;top:704px;">1:70000</div>
<div id="frame"></div>
</div>
</body></html>
